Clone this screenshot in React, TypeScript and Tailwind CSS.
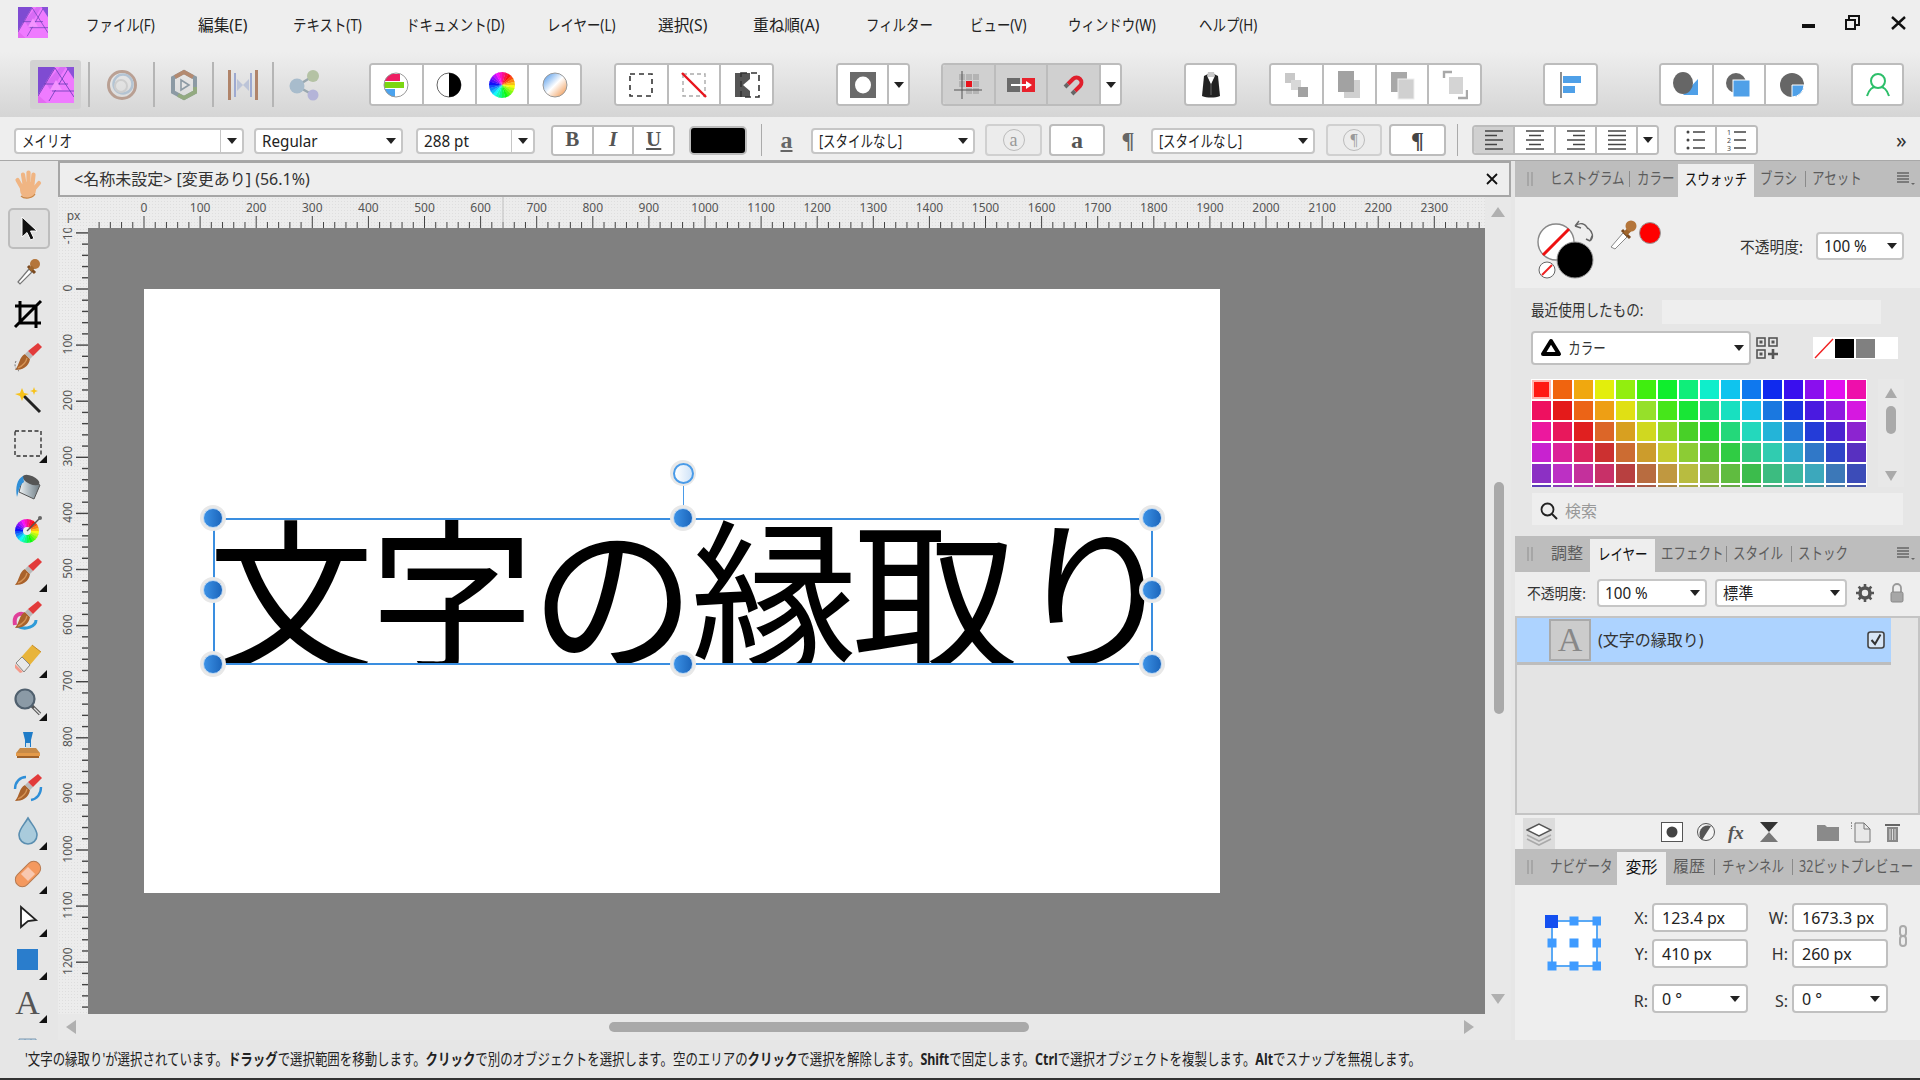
import React from "react";

const Caret = ({ c = "#222" }: { c?: string }) => (
  <svg width="10" height="6" viewBox="0 0 10 6" className="shrink-0"><polygon points="0,0 10,0 5,6" fill={c} /></svg>
);

const G = ({ className = "", children }: { className?: string; children: React.ReactNode }) => (
  <div className={"flex shrink-0 rounded-[4px] border-2 border-[#bcbcbc] bg-white overflow-hidden " + className}>{children}</div>
);
const C = ({ className = "flex-1", active = false, children }: { className?: string; active?: boolean; children?: React.ReactNode }) => (
  <div className={"flex items-center justify-center h-full border-l-2 border-[#bcbcbc] first:border-l-0 " + (active ? "bg-[#d0d0d0] " : "bg-white ") + className}>{children}</div>
);

const Sel = ({ className = "", text, divider = false, dense = false }: { className?: string; text: string; divider?: boolean; dense?: boolean }) => (
  <div className={"flex shrink-0 items-center rounded-[4px] border-2 border-[#c6c6c6] bg-white pl-[6px] text-[16px] text-[#222] " + className}>
    <span className={"flex-1 whitespace-nowrap min-w-0 inline-block origin-left " + (dense ? "scale-x-[0.78]" : "scale-x-[0.95]")}>{text}</span>
    {divider ? <span className="h-full w-[1px] bg-[#c6c6c6]" /> : null}
    <span className={divider ? "w-[21px] flex justify-center" : "w-[20px] flex justify-center"}><Caret /></span>
  </div>
);

const Wheel = ({ r = 12, cx = 12, cy = 12 }: { r?: number; cx?: number; cy?: number }) => {
  const n = 24;
  return (
    <g>
      {Array.from({ length: n }).map((_, i) => {
        const a0 = (i / n) * Math.PI * 2;
        const a1 = ((i + 1.1) / n) * Math.PI * 2;
        return (
          <path
            key={i}
            d={`M${cx} ${cy}L${cx + r * Math.sin(a0)} ${cy - r * Math.cos(a0)}L${cx + r * Math.sin(a1)} ${cy - r * Math.cos(a1)}Z`}
            fill={`hsl(${(i / n) * 360 + 330},95%,52%)`}
          />
        );
      })}
    </g>
  );
};

const Logo = ({ w, h }: { w: number; h: number }) => (
  <svg width={w} height={h} viewBox="0 0 36 36" preserveAspectRatio="none">
    <rect width="36" height="36" fill="#ef7bff" />
    <polygon points="0,0 17,0 0,28" fill="#7f4bd2" />
    <polygon points="0,36 0,28 9,36" fill="#e36bf2" />
    <polygon points="36,0 28,0 36,12" fill="#8a52d8" />
    <polygon points="22,0 28,0 13,24 8,16" fill="#d86cf5" />
    <path d="M0 29L17 1M17 1L36 30M30 2L11 34M6 17H30M14 24H36" stroke="#5c3ab0" strokeWidth="1" fill="none" opacity="0.75" />
    <polygon points="18,13 24,23 12,23" fill="#f494ff" />
  </svg>
);

const Brush = ({ tip = "#e23b3b" }: { tip?: string }) => (
  <>
    <path d="M3 29C10 29 17 26 18 18L13 13C7 16 8 23 3 29Z" fill="#a9622b" />
    <path d="M6 27C10 25 14 22 15 17" stroke="#d59356" strokeWidth="1.3" fill="none" />
    <polygon points="13,13 18,18 21,15 16,10" fill="#b9b9b9" />
    <polygon points="16,10 21,15 30,6 26,2" fill={tip} />
  </>
);
const T32 = ({ children, s = 32 }: { children: React.ReactNode; s?: number }) => (
  <svg width={s} height={s} viewBox="0 0 32 32">{children}</svg>
);

const tools: { el: React.ReactNode; fly?: boolean; sel?: boolean }[] = [
  { el: <T32><g stroke="#f0b583" strokeWidth="4.2" strokeLinecap="round"><path d="M10 19L5.5 11" /><path d="M12.5 15L11 5.5" /><path d="M16.5 15L16.5 3.5" /><path d="M20.5 15L21.5 5.5" /><path d="M22 20L27 14" /></g><ellipse cx="16" cy="21" rx="8" ry="8.5" fill="#f0b583" /><path d="M9 27C12 30 20 30 23 25" stroke="#c98646" strokeWidth="1.2" fill="none" /></T32> },
  { sel: true, el: <T32><polygon points="10,5 10,25 15,20.5 18.5,28 22,26.5 18.5,19 25,19" fill="#111" stroke="#fff" strokeWidth="1" /></T32> },
  { el: <T32><path d="M6 27L17 14L20 17L8 29Z" fill="#fff" stroke="#777" strokeWidth="1.2" /><path d="M16 11L23 18" stroke="#7a4a20" strokeWidth="3" /><circle cx="23" cy="9" r="5" fill="#b4753a" /><path d="M18 15L21 12" stroke="#a0662c" strokeWidth="4" /></T32> },
  { el: <T32><path d="M8 3V25H29M3 8H24V30M3 29L29 3" stroke="#000" strokeWidth="3" fill="none" /></T32> },
  { el: <T32><Brush /><path d="M4 20C2 24 3 28 7 30" stroke="#777" strokeWidth="1" strokeDasharray="2 1.5" fill="none" /></T32> },
  { el: <T32><path d="M11 11L28 28" stroke="#222" strokeWidth="3" /><path d="M10 4L12 9L17 10L12 12L10 17L8 12L3 10L8 9Z" fill="#f7c21a" /><path d="M22 3L23 6L26 7L23 8L22 11L21 8L18 7L21 6Z" fill="#f7c21a" /></T32> },
  { fly: true, el: <T32><rect x="3" y="4" width="26" height="25" fill="none" stroke="#333" strokeWidth="1.4" strokeDasharray="4 2.5" /></T32> },
  { el: <T32><defs><linearGradient id="bk" x1="0" x2="1"><stop offset="0" stopColor="#eef2f4" /><stop offset="0.5" stopColor="#aab6bd" /><stop offset="1" stopColor="#6f7a80" /></linearGradient></defs><path d="M11 7L28 15L22 29L7 22Z" fill="url(#bk)" stroke="#555" /><ellipse cx="19" cy="10" rx="9" ry="4" transform="rotate(24 19 10)" fill="#555" /><path d="M11 6C5 9 3 18 5 27C7 21 7 15 12 12Z" fill="#2f8fd8" /></T32> },
  { el: <T32><Wheel cx={15} cy={18} r={12} /><circle cx="15" cy="18" r="4" fill="#eee" /><path d="M15 18L28 5" stroke="#555" strokeWidth="1.4" /><circle cx="28" cy="5" r="2" fill="#666" /></T32> },
  { fly: true, el: <T32><Brush /></T32> },
  { el: <T32><path d="M3 26C1 14 10 13 14 17" stroke="#e0409a" strokeWidth="4" fill="none" /><path d="M5 27C14 32 24 27 24 21" stroke="#2f9bd8" strokeWidth="3" fill="none" /><Brush /></T32> },
  { fly: true, el: <T32><polygon points="4,20 12,29 29,9 20,2" fill="#e8b43a" /><polygon points="4,20 12,29 18,22 10,14" fill="#e8e8e8" stroke="#888" /><polygon points="3,21 11,29 8,30 3,25" fill="#f49a8a" /><path d="M20 2L29 9" stroke="#c68a24" /></T32> },
  { fly: true, el: <T32><path d="M20 20L28 28" stroke="#555" strokeWidth="3.4" /><path d="M22 22L28 28" stroke="#ddd" strokeWidth="1.2" /><circle cx="13" cy="13" r="9.5" fill="#8b9aa6" stroke="#50606e" strokeWidth="2.2" /></T32> },
  { el: <T32><path d="M11 3H21L19 11V18H13V11Z" fill="#1f7cc8" /><rect x="14" y="14" width="4" height="7" fill="#cfe0ea" /><path d="M4 24L8 19H24L28 24Z" fill="#c78a47" /><rect x="4" y="24" width="24" height="3" fill="#e39a4a" /><rect x="5" y="27" width="22" height="2" fill="#a0622a" /></T32> },
  { el: <T32><Brush /><path d="M3 17C3 10 8 5 14 5" stroke="#2f8fd8" strokeWidth="2.4" fill="none" /><path d="M29 15C29 22 25 27 19 28" stroke="#2f8fd8" strokeWidth="2.4" fill="none" /></T32> },
  { fly: true, el: <T32><path d="M16 3C12 10 7 14 7 20A9 9 0 0 0 25 20C25 14 20 10 16 3Z" fill="#a9cbdc" stroke="#5a8eb0" strokeWidth="1.6" /></T32> },
  { fly: true, el: <T32><rect x="1" y="9" width="30" height="14" rx="7" transform="rotate(-45 16 16)" fill="#f4995f" stroke="#b77a50" /><rect x="11" y="11" width="10" height="10" transform="rotate(-45 16 16)" fill="#f8c8b0" /></T32> },
  { fly: true, el: <T32><polygon points="9,6 9,26 16,20 24,19" fill="#fff" stroke="#222" strokeWidth="1.8" /></T32> },
  { fly: true, el: <T32><rect x="5" y="5" width="21" height="21" fill="#2a7dcc" /></T32> },
  { fly: true, el: <span className="font-['Liberation_Serif',serif] text-[34px] leading-none text-[#555]">A</span> },
  { el: <svg width="20" height="30" viewBox="0 0 20 30" className="mt-[12px]"><path d="M1 2H18L19 24H1Z" fill="#c8dff0" stroke="#7a98b0" /><path d="M7 2V24M13 2V24" stroke="#7a98b0" /></svg> },
];

const TopRuler = () => {
  const o = 56;
  const s = 56.1;
  const ticks: React.ReactNode[] = [];
  for (let i = 0; i < 125; i++) {
    const x = o + (s / 5) * i;
    if (x > 1397) break;
    ticks.push(<line key={i} x1={x} x2={x} y1={i % 5 === 0 ? 19 : 25} y2={31} stroke="#444" strokeWidth="1" />);
  }
  return (
    <svg width="1397" height="31" viewBox="0 0 1397 31" className="block">
      {[1, 2, 3, 4].map((i) => <line key={i} x1={o - (s / 5) * i} x2={o - (s / 5) * i} y1={25} y2={31} stroke="#444" />)}
      {ticks}
      <line x1="415" x2="415" y1="0" y2="31" stroke="#bfbfbf" />
      {Array.from({ length: 24 }).map((_, i) => (
        <text key={i} x={o + s * i} y="15" textAnchor="middle" fontSize="12" fill="#555" fontFamily="Noto Sans">{i * 100}</text>
      ))}
    </svg>
  );
};

const LeftRuler = () => {
  const o = 61;
  const s = 56.1;
  const ticks: React.ReactNode[] = [];
  for (let i = -5; i < 70; i++) {
    const y = o + (s / 5) * i;
    if (y > 786) break;
    ticks.push(<line key={i} y1={y} y2={y} x1={i % 5 === 0 ? 18 : 24} x2={30} stroke="#444" strokeWidth="1.4" />);
  }
  return (
    <svg width="30" height="786" viewBox="0 0 30 786" className="block">
      {ticks}
      <line x1="0" x2="30" y1="311" y2="311" stroke="#bfbfbf" />
      {Array.from({ length: 14 }).map((_, i) => {
        const y = o + s * (i - 1);
        return (
          <text key={i} x="0" y="0" textAnchor="middle" fontSize="12" fill="#555" fontFamily="Noto Sans" transform={`translate(13.5 ${y - 1}) rotate(-90)`}>{(i - 1) * 100}</text>
        );
      })}
    </svg>
  );
};

const Handle = ({ x, y }: { x: number; y: number }) => (
  <div style={{ left: x - 13, top: y - 13 }} className="absolute w-[26px] h-[26px] rounded-full bg-[#e8e8e8] flex items-center justify-center">
    <div className="w-[20px] h-[20px] rounded-full bg-linear-to-r from-[#3c92e6] to-[#1c66bc] border border-[#bcd8f4]" />
  </div>
);

const swatches = [
  ["#ff1a12", "#f0640f", "#f0a80f", "#e3ee0c", "#92ee0f", "#40ee0f", "#0fee2d", "#0fee7a", "#0feecb", "#0fc4ee", "#0f78ee", "#0f2aee", "#3a0fee", "#8a0fee", "#e20fee", "#ee0fab"],
  ["#ee1060", "#e41a1a", "#ec6416", "#ee9f14", "#e0e014", "#96e02a", "#46e61a", "#18e636", "#18e07c", "#18e0c0", "#18c0e6", "#1a78e0", "#1a34e0", "#4a1ae0", "#8f1ae0", "#d618e0"],
  ["#ec189e", "#e8185c", "#e02020", "#dc6628", "#d8a020", "#d0d820", "#90d828", "#48d028", "#24d83a", "#24d87a", "#24d8bc", "#24b4d8", "#2478d8", "#243cd8", "#4c24d0", "#8c24d0"],
  ["#c822d0", "#dc2298", "#dc2460", "#cc3030", "#cc6c32", "#cc9c2c", "#c4cc30", "#8ccc34", "#54c434", "#30cc44", "#30c880", "#30ccb0", "#30a8cc", "#3078c8", "#3044c8", "#5830c0"],
  ["#8c30c4", "#bc30c4", "#c4309c", "#c83068", "#b84040", "#b86c40", "#c09840", "#b8bc40", "#88b840", "#60bc40", "#3cbc4c", "#3cbc80", "#3cb8a0", "#3ca8bc", "#3c78b8", "#3c4cb8"],
  ["#5c3cb8", "#8c3cb8", "#b03cb0", "#b83c84", "#b03c50", "#a85c48", "#a88448", "#a8a848", "#84a848", "#68a848", "#48a850", "#48a87c", "#48a898", "#48949c", "#4878a8", "#4858a8"],
];

const tabBase = "absolute top-0 h-full flex items-center pb-[2px] text-[16px] whitespace-nowrap text-[#5c5c5c] origin-left ";
const Tabs = ({ items, active, menu = true }: { items: { t: string; x: number; k?: boolean }[]; active: { t: string; x: number; w: number; k?: boolean }; menu?: boolean }) => (
  <div className="relative h-[36px] w-full shrink-0 bg-[#bdbdbd] overflow-hidden">
    <div className="absolute left-[12px] top-[11px] w-[6px] h-[14px] border-x-2 border-[#a6a6a6]" />
    {items.map((it) => (
      <span key={it.t} style={{ left: it.x }} className={tabBase + (it.k ? "" : "scale-x-[0.78]")}>{it.t}</span>
    ))}
    <div style={{ left: active.x, width: active.w }} className="absolute top-[3px] bottom-0 bg-[#eeeeee] flex items-center justify-center pb-[4px] text-[16px] text-[#111] whitespace-nowrap">
      <span className={active.k ? "" : "scale-x-[0.78]"}>{active.t}</span>
    </div>
    {menu ? (
      <svg width="18" height="14" viewBox="0 0 18 14" className="absolute left-[382px] top-[11px]"><path d="M0 1H12M0 4H12M0 7H12M0 10H12" stroke="#666" strokeWidth="1.4" /><polygon points="14,11 18,11 16,13" fill="#666" /></svg>
    ) : null}
  </div>
);
const Pipe = ({ x }: { x: number }) => <span style={{ left: x }} className="absolute top-[10px] h-[16px] w-[1px] bg-[#8a8a8a]" />;

const Field = ({ text, sel = false, className = "" }: { text: string; sel?: boolean; className?: string }) => (
  <div className={"flex h-[29px] items-center rounded-[4px] border-2 border-[#c0c0c0] bg-white pl-[8px] text-[16px] text-[#222] " + className}>
    <span className="flex-1 whitespace-nowrap">{text}</span>
    {sel ? <span className="w-[22px] flex justify-center"><Caret /></span> : null}
  </div>
);

const Lines = ({ rows }: { rows: [number, number][] }) => (
  <svg width="22" height="22" viewBox="0 0 22 22">
    {rows.map(([a, b], i) => <line key={i} x1={a} x2={b} y1={2 + i * 4.5} y2={2 + i * 4.5} stroke="#444" strokeWidth="1.6" />)}
  </svg>
);

const rulerBg = "bg-[#ececec] bg-[radial-gradient(#dedede_1px,transparent_1px)] bg-[length:3px_3px]";

export default function App() {
  const menu: [string, string, boolean][] = [
    ["ファイル(F)", "ml-[86px] w-[70px]", false],
    ["編集(E)", "ml-[42px] w-[54px]", true],
    ["テキスト(T)", "ml-[41px] w-[73px]", false],
    ["ドキュメント(D)", "ml-[40px] w-[99px]", false],
    ["レイヤー(L)", "ml-[42px] w-[69px]", false],
    ["選択(S)", "ml-[42px] w-[55px]", true],
    ["重ね順(A)", "ml-[40px] w-[74px]", true],
    ["フィルター", "ml-[39px] w-[64px]", false],
    ["ビュー(V)", "ml-[40px] w-[57px]", false],
    ["ウィンドウ(W)", "ml-[41px] w-[90px]", false],
    ["ヘルプ(H)", "ml-[41px] w-[66px]", false],
  ];
  return (
    <div className="relative flex flex-col w-[1920px] h-[1080px] overflow-hidden bg-[#eeeeee] font-['Noto_Sans','Noto_Sans_CJK_JP',sans-serif] text-[#222]">
      {/* Menu bar */}
      <div className="relative flex items-center h-[52px] shrink-0 bg-[#eeeeee] text-[16px] pb-[2px]">
        <div className="absolute left-[18px] top-[7px]"><Logo w={30} h={31} /></div>
        {menu.map(([t, c, k]) => (
          <div key={t} className={"shrink-0 whitespace-nowrap " + c}>
            <span className={"inline-block origin-left " + (k ? "scale-x-[0.98]" : "scale-x-[0.84]")}>{t}</span>
          </div>
        ))}
        <div className="absolute right-0 top-0 h-[52px] w-[120px]">
          <svg width="120" height="52" viewBox="0 0 120 52">
            <rect x="2" y="24" width="13" height="4" fill="#111" />
            <path d="M49 20V16H59V25H56M46 20H55V29H46Z" fill="none" stroke="#111" strokeWidth="2" />
            <path d="M92 17L105 29M105 17L92 29" stroke="#111" strokeWidth="2.4" />
          </svg>
        </div>
      </div>

      {/* Toolbar */}
      <div className="flex items-center h-[65px] shrink-0 bg-linear-to-b from-[#eeeeee] to-[#d5d5d5] pl-[30px]">
        <div className="w-[51px] h-[49px] shrink-0 rounded-[3px] bg-[#d2d2d2] flex items-center justify-center"><Logo w={36} h={36} /></div>
        <div className="ml-[7px] w-[2px] h-[45px] bg-[#b5b5b5] shrink-0" />
        <div className="w-[63px] flex justify-center shrink-0 opacity-80">
          <svg width="32" height="32" viewBox="0 0 32 32"><circle cx="16" cy="16" r="13.5" fill="none" stroke="#b09080" strokeWidth="3" /><circle cx="17" cy="15" r="9.5" fill="none" stroke="#a9bdd0" strokeWidth="2.5" /><circle cx="15" cy="17" r="6" fill="none" stroke="#c9c9c9" strokeWidth="2" /></svg>
        </div>
        <div className="w-[2px] h-[45px] bg-[#b5b5b5] shrink-0" />
        <div className="w-[57px] flex justify-center shrink-0">
          <svg width="30" height="32" viewBox="0 0 30 32"><polygon points="15,3 26,9 26,23 15,29 4,23 4,9" fill="none" stroke="#8c9aa4" strokeWidth="4" /><path d="M6 8L15 3L24 8" fill="none" stroke="#b48a70" strokeWidth="4" /><path d="M26 18V23L15 29L9 26" fill="none" stroke="#93aa80" strokeWidth="4" /><path d="M12 11L20 16L12 21Z" fill="#e4e4e4" stroke="#8c9aa4" strokeWidth="1.6" /></svg>
        </div>
        <div className="w-[2px] h-[45px] bg-[#b5b5b5] shrink-0" />
        <div className="w-[58px] flex justify-center shrink-0">
          <svg width="32" height="32" viewBox="0 0 32 32"><rect x="1" y="1" width="3" height="30" fill="#b0846a" /><rect x="28" y="1" width="3" height="30" fill="#b0846a" /><rect x="7" y="4" width="2" height="24" fill="#9da9d0" /><rect x="23" y="4" width="2" height="24" fill="#9da9d0" /><polygon points="10,10 16,16 10,22" fill="#bcc4d8" /><polygon points="22,10 16,16 22,22" fill="#bcc4d8" /></svg>
        </div>
        <div className="w-[2px] h-[45px] bg-[#b5b5b5] shrink-0" />
        <div className="w-[59px] flex justify-center shrink-0">
          <svg width="32" height="32" viewBox="0 0 32 32"><path d="M9 17L25 7M9 17L25 26" stroke="#9aa8b0" strokeWidth="2.5" /><circle cx="9" cy="17" r="7.5" fill="#a8bccc" /><circle cx="25" cy="7" r="6" fill="#b4c2a4" /><circle cx="25" cy="26" r="5.5" fill="#b4b4d8" /></svg>
        </div>

        <G className="ml-[36px] w-[213px] h-[43px]">
          <C><svg width="26" height="26" viewBox="0 0 26 26"><defs><clipPath id="hc"><circle cx="13" cy="13" r="12" /></clipPath></defs><g clipPath="url(#hc)"><rect width="26" height="26" fill="#fff" /><rect x="0" y="2" width="17" height="7" fill="#ee1f63" /><rect x="0" y="10" width="21" height="6" fill="#7bd612" /><rect x="0" y="17" width="12" height="8" fill="#4ba3ee" /></g><circle cx="13" cy="13" r="12" fill="none" stroke="#999" /></svg></C>
          <C><svg width="26" height="26" viewBox="0 0 26 26"><circle cx="13" cy="13" r="12" fill="#fff" stroke="#666" /><path d="M13 1A12 12 0 0 1 13 25Z" fill="#000" /></svg></C>
          <C><svg width="26" height="26" viewBox="0 0 24 24"><Wheel /></svg></C>
          <C><svg width="26" height="26" viewBox="0 0 26 26"><defs><linearGradient id="gr" x1="0" y1="0" x2="1" y2="1"><stop offset="0" stopColor="#3e8ee8" /><stop offset="0.5" stopColor="#fff" /><stop offset="1" stopColor="#ee8a3a" /></linearGradient></defs><circle cx="13" cy="13" r="12" fill="url(#gr)" stroke="#999" /></svg></C>
        </G>
        <G className="ml-[32px] w-[160px] h-[43px]">
          <C><svg width="24" height="24" viewBox="0 0 24 24"><rect x="1" y="1" width="22" height="22" fill="none" stroke="#333" strokeWidth="1.6" strokeDasharray="5 4" /></svg></C>
          <C><svg width="26" height="26" viewBox="0 0 26 26"><rect x="2" y="2" width="22" height="22" fill="none" stroke="#aaa" strokeWidth="1.4" strokeDasharray="4 3" /><line x1="1" y1="1" x2="25" y2="25" stroke="#e8141c" strokeWidth="2.4" /></svg></C>
          <C><svg width="26" height="26" viewBox="0 0 26 26"><rect x="1" y="1" width="15" height="24" fill="#555" /><polygon points="16,7 9,13 16,19" fill="#fff" /><rect x="7" y="1" width="18" height="24" fill="none" stroke="#333" strokeWidth="1.6" strokeDasharray="6 4" /></svg></C>
        </G>
        <G className="ml-[62px] w-[74px] h-[43px]">
          <C><svg width="26" height="26" viewBox="0 0 26 26"><rect width="26" height="26" fill="#6a6a6a" /><ellipse cx="13" cy="13" rx="8" ry="8.5" fill="#fff" /></svg></C>
          <C className="w-[21px] shrink-0"><Caret /></C>
        </G>
        <G className="ml-[31px] w-[181px] h-[43px] bg-[#d0d0d0]">
          <C active><svg width="28" height="28" viewBox="0 0 28 28"><g fill="#b4b4b4"><rect x="5" y="3" width="6" height="6" /><rect x="12" y="3" width="6" height="6" /><rect x="19" y="3" width="6" height="6" /><rect x="5" y="10" width="6" height="6" /><rect x="19" y="10" width="6" height="6" /><rect x="12" y="17" width="6" height="6" /><rect x="19" y="17" width="6" height="6" /></g><rect x="12" y="10" width="6" height="6" fill="#e8141c" /><path d="M8 0V28M0 19H28" stroke="#555" strokeWidth="1" /></svg></C>
          <C active><svg width="28" height="16" viewBox="0 0 28 16"><rect y="1" width="13" height="14" fill="#6a6a6a" /><rect x="15" y="1" width="13" height="14" fill="#e8222c" /><path d="M4 8H20" stroke="#fff" strokeWidth="2" /><polygon points="19,4 25,8 19,12" fill="#fff" /></svg></C>
          <C active><svg width="22" height="22" viewBox="0 0 22 22"><path d="M5 10L10 5A4.95 4.95 0 0 1 17 12L12 17" fill="none" stroke="#e01f2c" strokeWidth="4" /><path d="M2 13L5 10M9 20L12 17" fill="none" stroke="#666" strokeWidth="4" /></svg></C>
          <C className="w-[21px] shrink-0"><Caret /></C>
        </G>
        <G className="ml-[62px] w-[53px] h-[43px]">
          <C><svg width="22" height="28" viewBox="0 0 22 28"><path d="M4 5L8 3H14L18 5L20 25C15 27 7 27 2 25Z" fill="#222" /><path d="M8 1H14L15 5L11 13L7 5Z" fill="#c8c8c8" /><path d="M8 6L11 13L14 6Z" fill="#fff" /><path d="M11 13V24" stroke="#666" /></svg></C>
        </G>
        <G className="ml-[32px] w-[213px] h-[43px]">
          <C><svg width="26" height="30" viewBox="0 0 26 30"><rect x="2" y="3" width="10" height="10" fill="#c8c8c8" /><rect x="8" y="10" width="10" height="10" fill="#d8d8d8" /><rect x="15" y="17" width="10" height="10" fill="#a2a2a2" /></svg></C>
          <C><svg width="26" height="30" viewBox="0 0 26 30"><rect x="8" y="10" width="16" height="18" fill="#d0d0d0" /><rect x="2" y="1" width="16" height="21" fill="#a2a2a2" /></svg></C>
          <C><svg width="26" height="30" viewBox="0 0 26 30"><rect x="2" y="2" width="16" height="20" fill="#a8a8a8" /><rect x="9" y="9" width="16" height="20" fill="#d0d0d0" stroke="#eee" /></svg></C>
          <C><svg width="26" height="30" viewBox="0 0 26 30"><path d="M2 8V2H10" fill="none" stroke="#a8a8a8" strokeWidth="2.4" /><rect x="7" y="7" width="14" height="17" fill="#d4d4d4" /><path d="M25 20V28H16" fill="none" stroke="#a8a8a8" strokeWidth="2.4" /></svg></C>
        </G>
        <G className="ml-[61px] w-[55px] h-[43px]">
          <C><svg width="22" height="26" viewBox="0 0 22 26"><line x1="1" y1="0" x2="1" y2="26" stroke="#444" strokeWidth="1.2" /><rect x="3" y="4" width="18" height="7" fill="#4fa0e8" /><rect x="3" y="14" width="12" height="7" fill="#4fa0e8" /></svg></C>
        </G>
        <G className="ml-[61px] w-[160px] h-[43px]">
          <C><svg width="30" height="28" viewBox="0 0 30 28"><path d="M12 24H27V8Z" fill="#4fa0e8" /><ellipse cx="12" cy="12" rx="10" ry="11" fill="#666" /></svg></C>
          <C><svg width="30" height="28" viewBox="0 0 30 28"><circle cx="12" cy="12" r="10" fill="#666" /><rect x="9" y="9" width="17" height="17" fill="#4fa0e8" stroke="#fff" /></svg></C>
          <C><svg width="26" height="28" viewBox="0 0 26 28"><circle cx="13" cy="14" r="12" fill="#666" /><path d="M13 14H25A12 12 0 0 1 13 26Z" fill="#4fa0e8" stroke="#fff" /></svg></C>
        </G>
        <G className="ml-[32px] w-[53px] h-[43px]">
          <C><svg width="26" height="26" viewBox="0 0 26 26"><circle cx="13" cy="9" r="7" fill="none" stroke="#2dbf6a" strokeWidth="2" /><path d="M2 24C4 17 8 15 10 15M24 24C22 17 18 15 16 15" fill="none" stroke="#2dbf6a" strokeWidth="2" /></svg></C>
        </G>
      </div>

      {/* Context bar */}
      <div className="flex items-center h-[44px] shrink-0 bg-[#eeeeee] border-b border-[#a8a8a8] pt-[3px] pl-[14px]">
        <Sel className="mt-[1px] w-[230px] h-[26px]" text="メイリオ" divider dense />
        <Sel className="mt-[1px] ml-[10px] w-[149px] h-[26px]" text="Regular" />
        <Sel className="mt-[1px] ml-[13px] w-[119px] h-[26px]" text="288 pt" divider />
        <G className="ml-[16px] w-[124px] h-[31px] font-['Liberation_Serif',serif] text-[21px] text-[#555]">
          <C><b>B</b></C>
          <C><i className="font-bold">I</i></C>
          <C><b className="underline">U</b></C>
        </G>
        <div className="ml-[14px] w-[58px] h-[29px] shrink-0 rounded-[5px] bg-black border-2 border-[#bcbcbc]" />
        <div className="ml-[14px] w-[1px] h-[32px] bg-[#aaa] shrink-0" />
        <div className="w-[49px] shrink-0 text-center font-['Liberation_Serif',serif] font-bold text-[24px] leading-none text-[#666] underline">a</div>
        <Sel className="mt-[1px] w-[164px] h-[26px]" text="[スタイルなし]" dense />
        <div className="ml-[10px] w-[57px] h-[32px] shrink-0 rounded-[4px] border-2 border-[#d0d0d0] bg-[#ececec] flex items-center justify-center font-['Liberation_Serif',serif] text-[18px] text-[#999]">
          <span className="w-[22px] h-[22px] rounded-full border border-[#bbb] flex items-center justify-center leading-none">a</span>
        </div>
        <div className="ml-[7px] w-[56px] h-[32px] shrink-0 rounded-[4px] border-2 border-[#bcbcbc] bg-white flex items-center justify-center font-['Liberation_Serif',serif] font-bold text-[24px] leading-none text-[#555]">a</div>
        <div className="w-[46px] shrink-0 text-center font-['Liberation_Serif',serif] font-bold text-[24px] leading-none text-[#666]">¶</div>
        <Sel className="mt-[1px] w-[164px] h-[26px]" text="[スタイルなし]" dense />
        <div className="ml-[11px] w-[56px] h-[32px] shrink-0 rounded-[4px] border-2 border-[#d0d0d0] bg-[#ececec] flex items-center justify-center font-['Liberation_Serif',serif] text-[16px] text-[#999]">
          <span className="w-[22px] h-[22px] rounded-full border border-[#bbb] flex items-center justify-center leading-none">¶</span>
        </div>
        <div className="ml-[7px] w-[57px] h-[32px] shrink-0 rounded-[4px] border-2 border-[#bcbcbc] bg-white flex items-center justify-center font-['Liberation_Serif',serif] font-bold text-[24px] leading-none text-[#444]">¶</div>
        <div className="ml-[11px] w-[1px] h-[32px] bg-[#aaa] shrink-0" />
        <G className="ml-[14px] w-[187px] h-[30px]">
          <C active><Lines rows={[[2, 20], [2, 14], [2, 20], [2, 14], [2, 20]]} /></C>
          <C><Lines rows={[[2, 20], [5, 17], [2, 20], [5, 17], [2, 20]]} /></C>
          <C><Lines rows={[[2, 20], [8, 20], [2, 20], [8, 20], [2, 20]]} /></C>
          <C><Lines rows={[[2, 20], [2, 20], [2, 20], [2, 20], [2, 20]]} /></C>
          <C className="w-[21px] shrink-0"><Caret /></C>
        </G>
        <G className="ml-[15px] w-[84px] h-[30px]">
          <C><svg width="20" height="20" viewBox="0 0 20 20"><g fill="#444"><circle cx="2" cy="2" r="1.5" /><circle cx="2" cy="10" r="1.5" /><circle cx="2" cy="18" r="1.5" /></g><path d="M7 2H19M7 10H19M7 18H19" stroke="#444" strokeWidth="1.5" /></svg></C>
          <C><svg width="20" height="22" viewBox="0 0 20 22"><g fontSize="7" fill="#444" fontFamily="Noto Sans"><text x="0" y="6">1</text><text x="0" y="14">2</text><text x="0" y="22">3</text></g><path d="M7 3H19M7 11H19M7 19H19" stroke="#444" strokeWidth="1.5" /></svg></C>
        </G>
        <div className="ml-[138px] text-[21px] leading-none text-[#333]">»</div>
      </div>

      {/* Main */}
      <div className="flex h-[879px] shrink-0 bg-[#e6e6e6]">
        {/* Tools */}
        <div className="w-[58px] shrink-0 bg-[#e6e6e6] pt-[2px] overflow-hidden">
          {tools.map((t, i) => (
            <div key={i} className="relative h-[43.1px] flex items-center justify-center pr-[3px]">
              {t.sel ? <div className="absolute left-[8px] top-[2px] w-[42px] h-[41px] rounded-[5px] border-2 border-[#bdbdbd] bg-[#e0e0e0]" /> : null}
              <div className="relative flex items-center justify-center">{t.el}</div>
              {t.fly ? (
                <svg width="8" height="8" viewBox="0 0 8 8" className="absolute left-[39px] top-[33px]"><polygon points="8,0 8,8 0,8" fill="#111" /></svg>
              ) : null}
            </div>
          ))}
        </div>

        {/* Center */}
        <div className="w-[1453px] shrink-0 flex flex-col">
          <div className="flex items-center h-[36px] shrink-0 bg-[#eeeeee] border-2 border-[#a6a6a6] pl-[14px] text-[16px] text-[#333]">
            <span className="flex-1 whitespace-nowrap">&lt;名称未設定&gt; [変更あり] (56.1%)</span>
            <svg width="12" height="12" viewBox="0 0 12 12" className="mr-[11px]"><path d="M1 1L11 11M11 1L1 11" stroke="#111" strokeWidth="1.8" /></svg>
          </div>
          <div className="flex flex-1 min-h-0">
            <div className="grid grid-cols-[30px_1397px] grid-rows-[31px_786px_26px]">
              <div className={rulerBg + " text-[12px] text-[#555] flex items-end justify-center pb-[3px] pl-[1px]"}>px</div>
              <div className={rulerBg}><TopRuler /></div>
              <div className={rulerBg + " overflow-hidden"}><LeftRuler /></div>
              {/* Canvas */}
              <div className="relative bg-[#808080] overflow-hidden">
                <div className="absolute left-[56px] top-[61px] w-[1076px] h-[604px] bg-white" />
                <div className="absolute left-[125px] top-[290px] w-[939px] h-[146px] overflow-hidden font-['Noto_Sans_CJK_JP',sans-serif] text-black text-[166px] tracking-[-5px] leading-[140px] whitespace-nowrap">
                  <span className="inline-block ml-[-5px]">文字の縁取り</span>
                </div>
                <div className="absolute left-[125px] top-[290px] w-[940px] h-[147px] border-2 border-[#3a8ee0]" />
                <div className="absolute left-[595px] top-[245px] w-[1px] h-[45px] bg-[#4a9be8]" />
                <div className="absolute left-[582px] top-[232px] w-[26px] h-[26px] rounded-full bg-[#e8e8e8] flex items-center justify-center">
                  <div className="w-[21px] h-[21px] rounded-full bg-linear-to-r from-white to-[#cfe3f8] border-2 border-[#4a9be8]" />
                </div>
                <Handle x={125} y={290} />
                <Handle x={595} y={290} />
                <Handle x={1064} y={290} />
                <Handle x={125} y={362} />
                <Handle x={1064} y={362} />
                <Handle x={125} y={436} />
                <Handle x={595} y={436} />
                <Handle x={1064} y={436} />
              </div>
              <div className="bg-[#e8e8e8]" />
              <div className="relative bg-[#e8e8e8]">
                <svg width="10" height="14" viewBox="0 0 10 14" className="absolute left-[-22px] top-[6px]"><polygon points="10,0 10,14 0,7" fill="#b0b0b0" /></svg>
                <div className="absolute left-[521px] top-[8px] w-[420px] h-[10px] rounded-full bg-[#a9a9a9]" />
                <svg width="10" height="14" viewBox="0 0 10 14" className="absolute left-[1376px] top-[6px]"><polygon points="0,0 0,14 10,7" fill="#b0b0b0" /></svg>
              </div>
            </div>
            <div className="relative w-[26px] bg-[#e8e8e8]">
              <svg width="14" height="10" viewBox="0 0 14 10" className="absolute left-[6px] top-[10px]"><polygon points="0,10 14,10 7,0" fill="#b0b0b0" /></svg>
              <div className="absolute left-[9px] top-[285px] w-[10px] h-[232px] rounded-full bg-[#a9a9a9]" />
              <svg width="14" height="10" viewBox="0 0 14 10" className="absolute left-[6px] top-[797px]"><polygon points="0,0 14,0 7,10" fill="#b0b0b0" /></svg>
            </div>
          </div>
        </div>

        {/* Gap */}
        <div className="w-[4px] shrink-0 bg-[#e6e6e6]" />

        {/* Right panels */}
        <div className="w-[405px] shrink-0 flex flex-col">
          <div className="relative">
            <Tabs
              items={[{ t: "ヒストグラム", x: 35 }, { t: "カラー", x: 122 }, { t: "ブラシ", x: 245 }, { t: "アセット", x: 297 }]}
              active={{ t: "スウォッチ", x: 163, w: 76 }}
            />
            <Pipe x={114} /><Pipe x={290} />
          </div>
          <div className="flex h-[91px] shrink-0 bg-[#eeeeee]">
            <svg width="150" height="91" viewBox="0 0 150 91" className="shrink-0">
              <circle cx="41" cy="45" r="18" fill="#fff" stroke="#888" strokeWidth="1.4" />
              <path d="M28 58L54 32" stroke="#ee1111" strokeWidth="3" />
              <circle cx="60" cy="63" r="18" fill="#000" stroke="#999" strokeWidth="1" />
              <circle cx="32" cy="73" r="8" fill="#fff" stroke="#666" />
              <path d="M27 78L37 68" stroke="#ee2222" strokeWidth="2" />
              <path d="M60 29C65 25 70 26 73 32M60 29L64 24M60 29L66 31M75 44C79 40 78 35 73 31M75 44L71 42M75 44L77 39" stroke="#666" strokeWidth="1.4" fill="none" />
              <path d="M96 50L108 36L112 40L100 52Z" fill="#fff" stroke="#888" />
              <path d="M107 33L115 41" stroke="#7a4a20" strokeWidth="3" />
              <path d="M110 37L115 32" stroke="#a0662c" strokeWidth="5" />
              <circle cx="116" cy="29" r="5.5" fill="#b4753a" />
              <circle cx="135" cy="36" r="10.5" fill="#ff0000" stroke="#999" strokeWidth="1" />
            </svg>
            <div className="ml-[75px] mt-[40px] text-[16px] leading-[20px] text-[#333] scale-x-[0.92] origin-left whitespace-nowrap w-[76px]">不透明度:</div>
            <Sel className="mt-[35px] w-[88px] h-[28px]" text="100 %" />
          </div>
          <div className="flex flex-col h-[248px] shrink-0 bg-[#e6e6e6] pl-[16px]">
            <div className="flex h-[24px] mt-[12px] items-center text-[16px] text-[#333]">
              <span className="w-[131px] whitespace-nowrap inline-block origin-left scale-x-[0.85] pb-[4px]">最近使用したもの:</span>
              <div className="h-full w-[219px] bg-[#eeeeee]" />
            </div>
            <div className="flex h-[34px] mt-[7px] items-center">
              <div className="flex items-center w-[220px] h-full rounded-[4px] border-2 border-[#c0c0c0] bg-white pl-[7px] text-[16px] text-[#333]">
                <svg width="22" height="20" viewBox="0 0 22 20"><path d="M11 3L19 16H3Z" fill="none" stroke="#000" strokeWidth="4" strokeLinejoin="round" /></svg>
                <span className="flex-1 pl-[8px] pb-[1px] inline-block origin-left scale-x-[0.78]">カラー</span>
                <span className="w-[20px] flex justify-center"><Caret /></span>
              </div>
              <svg width="22" height="22" viewBox="0 0 22 22" className="ml-[5px]"><g fill="none" stroke="#555" strokeWidth="1.6"><rect x="1" y="1" width="8" height="8" /><rect x="13" y="1" width="8" height="8" /><rect x="1" y="13" width="8" height="8" /></g><g fill="#555"><rect x="3.5" y="3.5" width="3" height="3" /><rect x="15.5" y="3.5" width="3" height="3" /><rect x="3.5" y="15.5" width="3" height="3" /></g><path d="M17 12V22M12 17H22" stroke="#555" strokeWidth="2.6" /></svg>
              <div className="ml-[35px] flex items-center w-[85px] h-[22px] bg-white">
                <svg width="21" height="22" viewBox="0 0 21 22"><path d="M2 21L20 2" stroke="#f02020" strokeWidth="1.4" /></svg>
                <div className="w-[19px] h-[19px] ml-[1px] bg-black" />
                <div className="w-[19px] h-[19px] ml-[2px] bg-[#808080]" />
              </div>
            </div>
            <div className="flex mt-[14px] h-[108px]">
              <div className="w-[336px] h-full bg-white overflow-hidden pl-[1px] pt-[1px]">
                <div className="grid grid-cols-[repeat(16,19px)] gap-[2px]">
                  {swatches.flat().map((c, i) => (
                    <div key={i} style={{ backgroundColor: c }} className={"w-[19px] h-[19px] " + (i === 0 ? "border-2 border-[#ffb4ac]" : "")} />
                  ))}
                </div>
              </div>
              <div className="relative ml-[11px] w-[26px] h-full bg-[#e8e8e8]">
                <svg width="12" height="10" viewBox="0 0 12 10" className="absolute left-[7px] top-[9px]"><polygon points="0,10 12,10 6,0" fill="#aaa" /></svg>
                <div className="absolute left-[8px] top-[27px] w-[10px] h-[28px] rounded-full bg-[#a9a9a9]" />
                <svg width="12" height="10" viewBox="0 0 12 10" className="absolute left-[7px] top-[92px]"><polygon points="0,0 12,0 6,10" fill="#aaa" /></svg>
              </div>
            </div>
            <div className="flex items-center mt-[6px] ml-[1px] w-[371px] h-[32px] bg-[#eeeeee] pl-[8px] pt-[3px] text-[16px] text-[#999]">
              <svg width="18" height="18" viewBox="0 0 18 18"><circle cx="7.5" cy="7.5" r="6" fill="none" stroke="#222" strokeWidth="1.8" /><path d="M12 12L17 17" stroke="#222" strokeWidth="2" /></svg>
              <span className="ml-[7px]">検索</span>
            </div>
          </div>

          <div className="relative">
            <Tabs
              items={[{ t: "調整", x: 36, k: true }, { t: "エフェクト", x: 146 }, { t: "スタイル", x: 218 }, { t: "ストック", x: 283 }]}
              active={{ t: "レイヤー", x: 75, w: 65 }}
            />
            <Pipe x={211} /><Pipe x={276} />
          </div>
          <div className="flex items-center h-[44px] shrink-0 bg-[#eeeeee] pl-[12px] pb-[2px] text-[15px] text-[#333]">
            <span className="w-[70px] whitespace-nowrap inline-block origin-left scale-x-[0.92]">不透明度:</span>
            <Sel className="w-[110px] h-[28px]" text="100 %" />
            <Sel className="ml-[8px] w-[132px] h-[28px]" text="標準" />
            <svg width="18" height="18" viewBox="0 0 18 18" className="ml-[9px]"><circle cx="9" cy="9" r="5" fill="none" stroke="#555" strokeWidth="3.6" /><path d="M9 0V4M9 14V18M0 9H4M14 9H18M2.6 2.6L5.5 5.5M12.5 12.5L15.4 15.4M15.4 2.6L12.5 5.5M5.5 12.5L2.6 15.4" stroke="#555" strokeWidth="2.6" /></svg>
            <svg width="14" height="20" viewBox="0 0 14 20" className="ml-[16px]"><path d="M3 9V5A4 4 0 0 1 11 5V9" fill="none" stroke="#999" strokeWidth="1.8" /><rect x="1" y="9" width="12" height="10" rx="1.5" fill="#a6a6a6" stroke="#888" /></svg>
          </div>
          <div className="h-[199px] shrink-0 border-2 border-[#c4c4c4] bg-[#e4e4e4]">
            <div className="flex items-center w-[374px] h-[47px] bg-[#add3ff] border-b-[3px] border-[#bdbdbd]">
              <div className="ml-[32px] w-[42px] h-[42px] bg-[#cccccc] border-2 border-[#aaaaaa] flex items-center justify-center font-['Liberation_Serif',serif] text-[34px] leading-none text-[#888]">A</div>
              <span className="ml-[7px] flex-1 whitespace-nowrap text-[16px] text-[#333]">(文字の縁取り)</span>
              <svg width="18" height="18" viewBox="0 0 18 18" className="mr-[6px]"><rect x="1" y="1" width="16" height="16" rx="2.5" fill="#d8e6f6" stroke="#444" strokeWidth="1.6" /><path d="M4.5 9L8 13L13.5 3.5" fill="none" stroke="#333" strokeWidth="2" /></svg>
            </div>
          </div>
          <div className="relative flex items-center h-[34px] shrink-0 bg-[#eeeeee]">
            <div className="ml-[8px] w-[32px] h-[31px] mt-[3px] bg-[#dcdcdc] flex items-center justify-center shrink-0">
              <svg width="26" height="24" viewBox="0 0 26 24"><path d="M1 8L13 2L25 8L13 14Z" fill="#fff" stroke="#555" strokeWidth="1.4" /><path d="M1 13L13 19L25 13M1 17L13 23L25 17" fill="none" stroke="#aaa" strokeWidth="1.6" /></svg>
            </div>
            <svg width="22" height="20" viewBox="0 0 22 20" className="ml-[106px]"><rect x="0.5" y="0.5" width="21" height="19" fill="#fff" stroke="#555" /><circle cx="11" cy="10" r="5.5" fill="#444" /></svg>
            <svg width="20" height="20" viewBox="0 0 20 20" className="ml-[13px]"><circle cx="10" cy="10" r="8.5" fill="#f4f4f4" stroke="#555" /><path d="M15 4A8.5 8.5 0 0 0 6 18Z" fill="#555" /></svg>
            <span className="ml-[12px] font-['Liberation_Serif',serif] italic font-bold text-[19px] leading-none text-[#555]">fx</span>
            <svg width="18" height="20" viewBox="0 0 18 20" className="ml-[16px]"><polygon points="0,0 18,0 9,10" fill="#333" /><polygon points="0,20 18,20 9,10" fill="#777" /></svg>
            <svg width="22" height="18" viewBox="0 0 22 18" className="ml-[39px]"><path d="M0 2H8L10 4H22V18H0Z" fill="#8a8a8a" /></svg>
            <svg width="20" height="22" viewBox="0 0 20 22" className="ml-[12px]"><path d="M4 2H13L19 8V21H4Z" fill="#e8e8e8" stroke="#777" /><path d="M13 2V8H19" fill="none" stroke="#777" /><path d="M0 1V8" stroke="#333" strokeDasharray="2 1" /></svg>
            <svg width="15" height="20" viewBox="0 0 15 20" className="ml-[14px]"><rect x="0" y="2" width="15" height="2" fill="#666" /><path d="M2 5H13V20H2Z" fill="#888" /><path d="M5 7V18M7.5 7V18M10 7V18" stroke="#ddd" /></svg>
          </div>

          <div className="relative">
            <Tabs
              menu={false}
              items={[{ t: "ナビゲータ", x: 35 }, { t: "履歴", x: 158, k: true }, { t: "チャンネル", x: 207 }, { t: "32ビットプレビュー", x: 284 }]}
              active={{ t: "変形", x: 102, w: 49, k: true }}
            />
            <Pipe x={199} /><Pipe x={277} />
          </div>
          <div className="flex h-[155px] shrink-0 bg-[#eeeeee]">
            <svg width="56" height="56" viewBox="0 0 56 56" className="ml-[30px] mt-[30px] shrink-0">
              <rect x="7" y="6" width="45" height="45" fill="#fff" stroke="#5aa9f5" strokeWidth="2" />
              {[7, 29, 52].flatMap((x) => [6, 28, 51].map((y) => (
                <rect key={x + "-" + y} x={x - 4.5} y={y - 4.5} width="9" height="9" fill="#3f9bff" />
              )))}
              <rect x="0" y="0" width="13" height="13" fill="#1450f0" />
            </svg>
            <div className="ml-[13px] mt-[18px] grid grid-cols-[38px_96px_44px_96px_22px] grid-rows-[29px_29px_38px] gap-y-[7px] text-[16px] text-[#333] items-center">
              <span className="text-right pr-[4px]">X:</span>
              <Field text="123.4 px" />
              <span className="text-right pr-[4px]">W:</span>
              <Field text="1673.3 px" />
              <svg width="10" height="22" viewBox="0 0 10 22" className="row-span-2 ml-[10px]"><rect x="2" y="1" width="6" height="10" rx="3" fill="none" stroke="#aaa" strokeWidth="2" /><rect x="2" y="11" width="6" height="10" rx="3" fill="none" stroke="#aaa" strokeWidth="2" /></svg>
              <span className="text-right pr-[4px]">Y:</span>
              <Field text="410 px" />
              <span className="text-right pr-[4px]">H:</span>
              <Field text="260 px" />
              <span className="text-right pr-[4px] self-end">R:</span>
              <Field text="0 °" sel className="self-end" />
              <span className="text-right pr-[4px] self-end">S:</span>
              <Field text="0 °" sel className="self-end" />
            </div>
          </div>
        </div>
      </div>

      {/* Status bar */}
      <div className="flex items-center h-[38px] shrink-0 bg-[#e6e6e6] pl-[25px] text-[16px] text-[#222]">
        <span className="inline-block origin-left whitespace-nowrap scale-x-[0.777]">
          '文字の縁取り'が選択されています。<b>ドラッグ</b>で選択範囲を移動します。<b>クリック</b>で別のオブジェクトを選択します。空のエリアの<b>クリック</b>で選択を解除します。<b>Shift</b>で固定します。<b>Ctrl</b>で選択オブジェクトを複製します。<b>Alt</b>でスナップを無視します。
        </span>
      </div>
      <div className="h-[2px] shrink-0 bg-[#333]" />
    </div>
  );
}
